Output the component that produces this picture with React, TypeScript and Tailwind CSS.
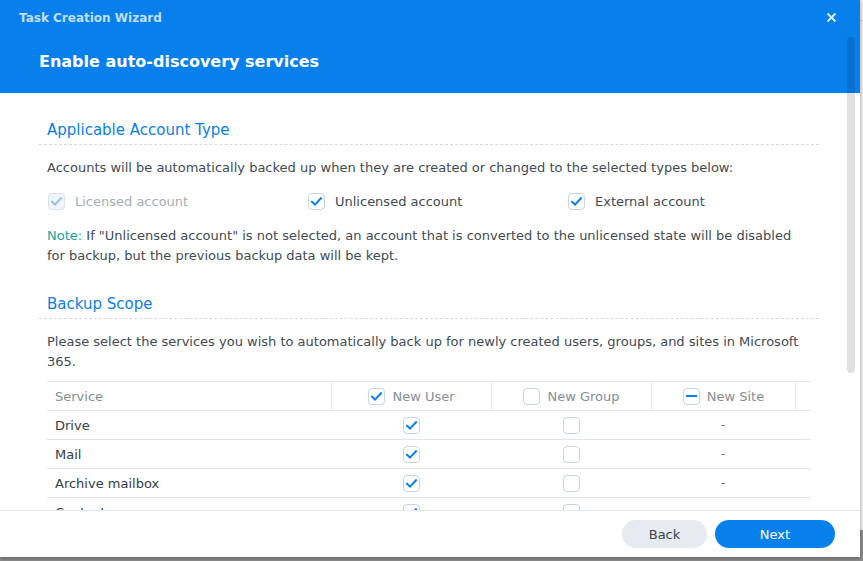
import React from "react";

type CbState = "checked" | "unchecked" | "indeterminate" | "disabled";

function Checkbox({ state }: { state: CbState }) {
  const disabled = state === "disabled";
  return (
    <span
      className={
        "inline-flex items-center justify-center w-[17px] h-[17px] rounded-[4px] border shrink-0 " +
        (disabled ? "bg-[#f1f5f9] border-[#d8e1ea]" : "bg-white border-[#c9d4df]")
      }
    >
      {(state === "checked" || state === "disabled") && (
        <svg width="13" height="13" viewBox="0 0 13 13">
          <path
            d="M2 6.8 L5 9.6 L11 3.2"
            fill="none"
            stroke={disabled ? "#8ec4f2" : "#0780eb"}
            strokeWidth="2"
            strokeLinecap="square"
          />
        </svg>
      )}
      {state === "indeterminate" && <span className="block w-[11px] h-[2px] bg-[#0780eb]" />}
    </span>
  );
}

function SectionTitle({ children, top }: { children: React.ReactNode; top: string }) {
  return (
    <div className={top + " border-b border-dashed border-[#cfdbe6] pb-[4px]"}>
      <div className="pl-[8px] pt-[1px] text-[15px] leading-[20px] text-[#0a7fe3]">{children}</div>
    </div>
  );
}

const rows = [
  { name: "Drive" },
  { name: "Mail" },
  { name: "Archive mailbox" },
  { name: "Contacts" },
  { name: "Calendar" },
];

export default function App() {
  return (
    <div className="w-[863px] h-[561px] bg-[#8c8c8c] relative overflow-hidden font-['DejaVu_Sans',sans-serif]">
      <div className="absolute right-0 top-0 w-[4px] h-[530px] bg-[#eeeeee]">
        <div className="mt-[20px] h-px bg-[#cfcfcf]" />
      </div>
      <div className="w-[860px] h-[557px] bg-white flex flex-col relative shadow-[0_1px_4px_rgba(0,0,0,0.35)]">
        <div className="h-[93px] bg-[#0780eb] shrink-0 relative">
          <div className="absolute left-[19px] top-[10px] text-[12px] leading-[16px] font-bold text-white/75">
            Task Creation Wizard
          </div>
          <div className="absolute left-[39px] top-[51px] text-[16px] leading-[21px] font-bold text-white">
            Enable auto-discovery services
          </div>
          <svg className="absolute left-[826px] top-[12px]" width="11" height="11" viewBox="0 0 11 11">
            <path d="M1.5 1.5 L9.5 9.5 M9.5 1.5 L1.5 9.5" stroke="#d6e9fb" strokeWidth="2" />
          </svg>
        </div>

        <div className="flex-1 overflow-hidden pl-[39px] pr-[41px] text-[13px] leading-[20px] text-[#414b55]">
          <SectionTitle top="pt-[26px]">Applicable Account Type</SectionTitle>
          <div className="pl-[8px] mt-[12px] pt-[1px]">
            Accounts will be automatically backed up when they are created or changed to the selected types below:
          </div>
          <div className="pl-[9px] mt-[13px] flex h-[20px] items-center pt-[1px]">
            <div className="w-[260px] flex items-center gap-[10px]">
              <Checkbox state="disabled" />
              <span className="text-[#a6adb4]">Licensed account</span>
            </div>
            <div className="w-[260px] flex items-center gap-[10px]">
              <Checkbox state="checked" />
              <span>Unlicensed account</span>
            </div>
            <div className="flex items-center gap-[10px]">
              <Checkbox state="checked" />
              <span>External account</span>
            </div>
          </div>
          <div className="pl-[8px] mt-[14px] pt-[1px]">
            <span className="text-[#14a8a0]">Note: </span>
            If "Unlicensed account" is not selected, an account that is converted to the unlicensed state will be disabled
            <br />
            for backup, but the previous backup data will be kept.
          </div>

          <SectionTitle top="mt-[27px]">Backup Scope</SectionTitle>
          <div className="pl-[8px] mt-[12px] pt-[1px]">
            Please select the services you wish to automatically back up for newly created users, groups, and sites in Microsoft
            <br />
            365.
          </div>

          <div className="ml-[8px] mr-[8px] mt-[9px] border-t border-[#dfe5ec]">
            <div className="grid grid-cols-[284px_160px_160px_144px_1fr] h-[29px] border-b border-[#dfe5ec] text-[#868e96]">
              <div className="pl-[8px] pt-[1px] flex items-center">Service</div>
              <div className="border-l border-[#dfe5ec] flex items-center justify-center gap-[7px]">
                <Checkbox state="checked" />
                <span className="pt-[1px]">New User</span>
              </div>
              <div className="border-l border-[#dfe5ec] flex items-center justify-center gap-[7px]">
                <Checkbox state="unchecked" />
                <span className="pt-[1px]">New Group</span>
              </div>
              <div className="border-l border-[#dfe5ec] flex items-center justify-center gap-[7px]">
                <Checkbox state="indeterminate" />
                <span className="pt-[1px]">New Site</span>
              </div>
              <div className="border-l border-[#dfe5ec]" />
            </div>
            {rows.map((r) => (
              <div
                key={r.name}
                className="grid grid-cols-[284px_160px_160px_144px_1fr] h-[29px] border-b border-[#dfe5ec] text-[#333d47]"
              >
                <div className="pl-[8px] pt-[1px] flex items-center">{r.name}</div>
                <div className="flex items-center justify-center">
                  <Checkbox state="checked" />
                </div>
                <div className="flex items-center justify-center">
                  <Checkbox state="unchecked" />
                </div>
                <div className="flex items-center justify-center text-[#6b747d]">-</div>
                <div />
              </div>
            ))}
          </div>
        </div>

        <div className="h-[47px] shrink-0 border-t border-[#e0e6ed] flex items-center justify-end gap-[8px] pr-[25px] text-[13px]">
          <button className="w-[85px] h-[28px] pt-[2px] rounded-full bg-[#e6ebf2] text-[#3b434b]">Back</button>
          <button className="w-[120px] h-[28px] pt-[2px] rounded-full bg-[#0780eb] text-white">Next</button>
        </div>

        <div className="absolute left-[847px] top-[37px] w-[8px] h-[336px] rounded-full bg-black/[0.12]" />
      </div>
    </div>
  );
}
